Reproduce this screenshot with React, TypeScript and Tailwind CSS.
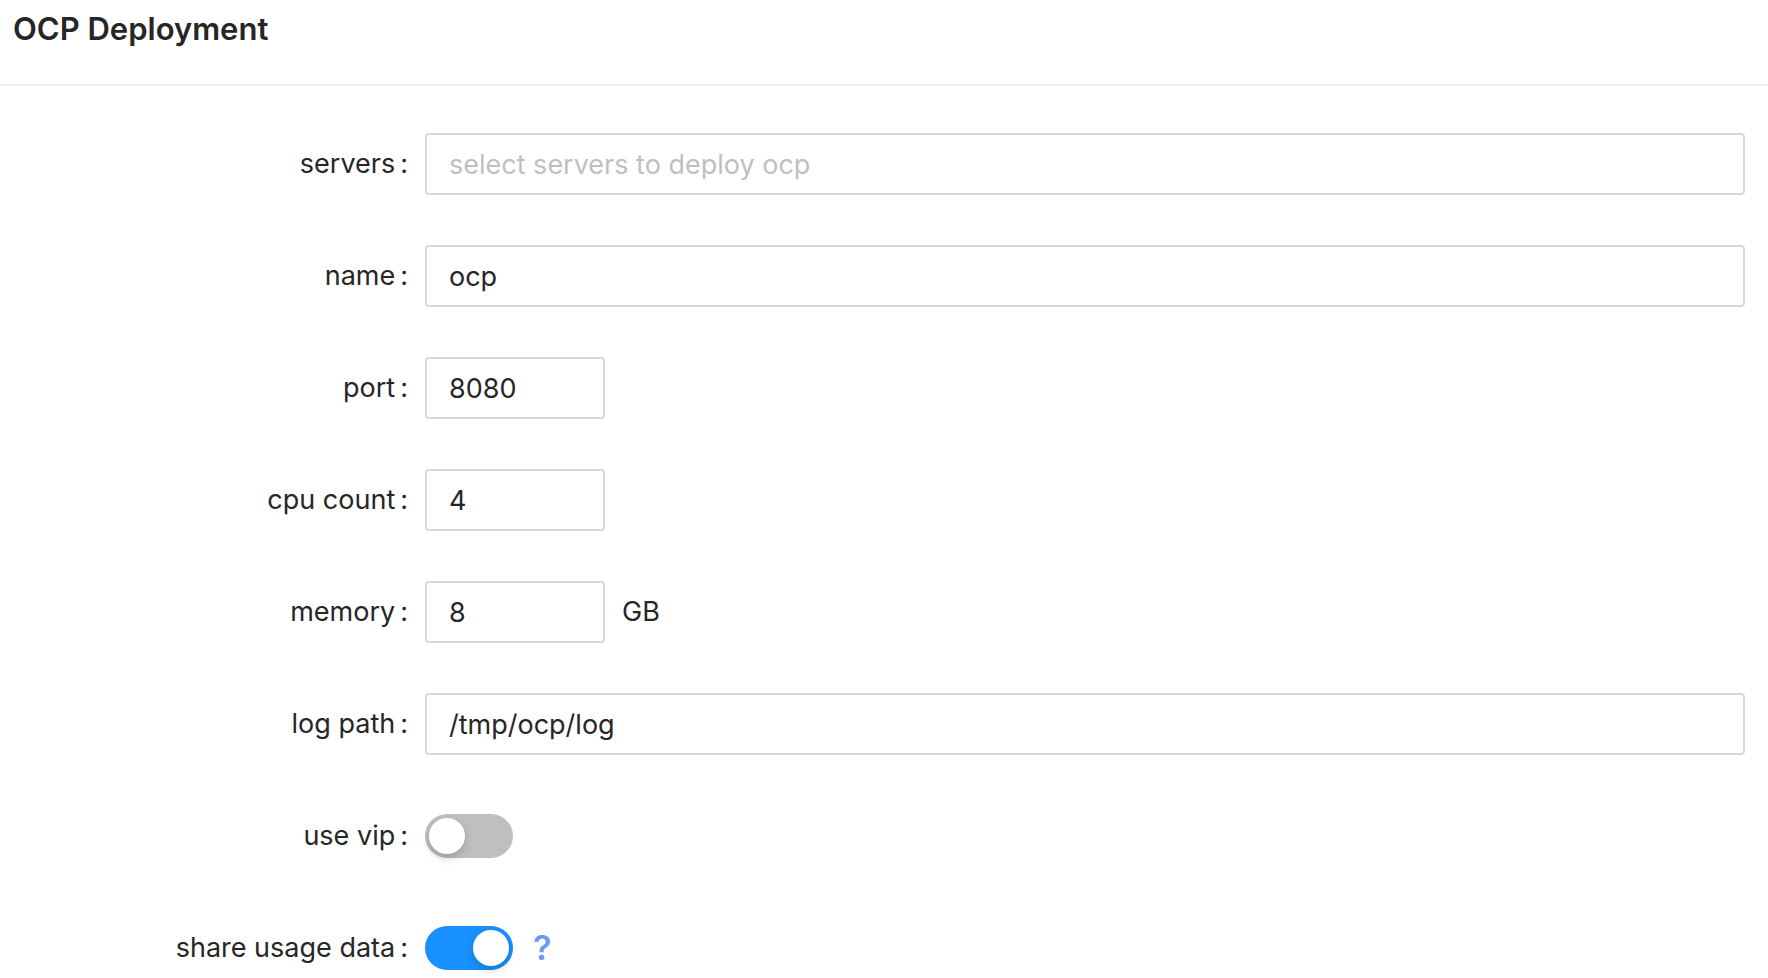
import { useState } from "react";

type Row = {
  label: string;
  kind: "text" | "short" | "switch";
  value?: string;
  placeholder?: string;
  suffix?: string;
};

const ROWS: Row[] = [
  { label: "servers", kind: "text", placeholder: "select servers to deploy ocp" },
  { label: "name", kind: "text", value: "ocp" },
  { label: "port", kind: "short", value: "8080" },
  { label: "cpu count", kind: "short", value: "4" },
  { label: "memory", kind: "short", value: "8", suffix: "GB" },
  { label: "log path", kind: "text", value: "/tmp/ocp/log" },
];

function Toggle({ on, onChange }: { on: boolean; onChange: () => void }) {
  return (
    <button
      type="button"
      onClick={onChange}
      className={`relative h-[44px] w-[88px] shrink-0 rounded-full transition-colors ${
        on ? "bg-[#1890ff]" : "bg-[#bfbfbf]"
      }`}
    >
      <span
        className={`absolute top-[4px] h-[36px] w-[36px] rounded-full bg-white shadow-[0_4px_8px_rgba(0,35,11,0.2)] transition-all ${
          on ? "left-[48px]" : "left-[4px]"
        }`}
      />
    </button>
  );
}

function Label({ text }: { text: string }) {
  return (
    <div className="flex w-[425px] shrink-0 items-center justify-end pr-[17px]">
      <span>{text}</span>
      <span className="ml-[5px]">:</span>
    </div>
  );
}

export default function App() {
  const [values, setValues] = useState<Record<string, string>>(() => {
    const init: Record<string, string> = {};
    ROWS.forEach((r) => (init[r.label] = r.value ?? ""));
    return init;
  });
  const [useVip, setUseVip] = useState(false);
  const [share, setShare] = useState(true);

  const inputClass =
    "h-[62px] rounded-[4px] border-2 border-[#d9d9d9] bg-white px-[22px] text-[27px] text-[#262626] placeholder-[#bfbfbf] outline-none";

  return (
    <div className="min-h-screen bg-white font-['Inter',sans-serif] text-[#262626]">
      <div className="h-[86px] border-b-2 border-[#f0f0f0] pl-[13px] pt-[13px]">
        <h1 className="text-[31px] font-semibold leading-none">OCP Deployment</h1>
      </div>

      <form className="flex flex-col gap-[48px] pr-[23px] pt-[46px] text-[27px]">
        {ROWS.map((row) => (
          <div key={row.label} className="flex h-[64px] items-center">
            <Label text={row.label} />
            <input
              value={values[row.label]}
              placeholder={row.placeholder}
              onChange={(e) => setValues({ ...values, [row.label]: e.target.value })}
              className={`${inputClass} ${row.kind === "short" ? "w-[180px]" : "min-w-0 flex-1"}`}
            />
            {row.suffix && <span className="ml-[17px]">{row.suffix}</span>}
          </div>
        ))}

        <div className="flex h-[64px] items-center">
          <Label text="use vip" />
          <Toggle on={useVip} onChange={() => setUseVip(!useVip)} />
        </div>

        <div className="flex h-[64px] items-center">
          <Label text="share usage data" />
          <Toggle on={share} onChange={() => setShare(!share)} />
          <span className="ml-[20px] text-[34px] font-semibold leading-none text-[#6a9af2]">?</span>
        </div>
      </form>
    </div>
  );
}
